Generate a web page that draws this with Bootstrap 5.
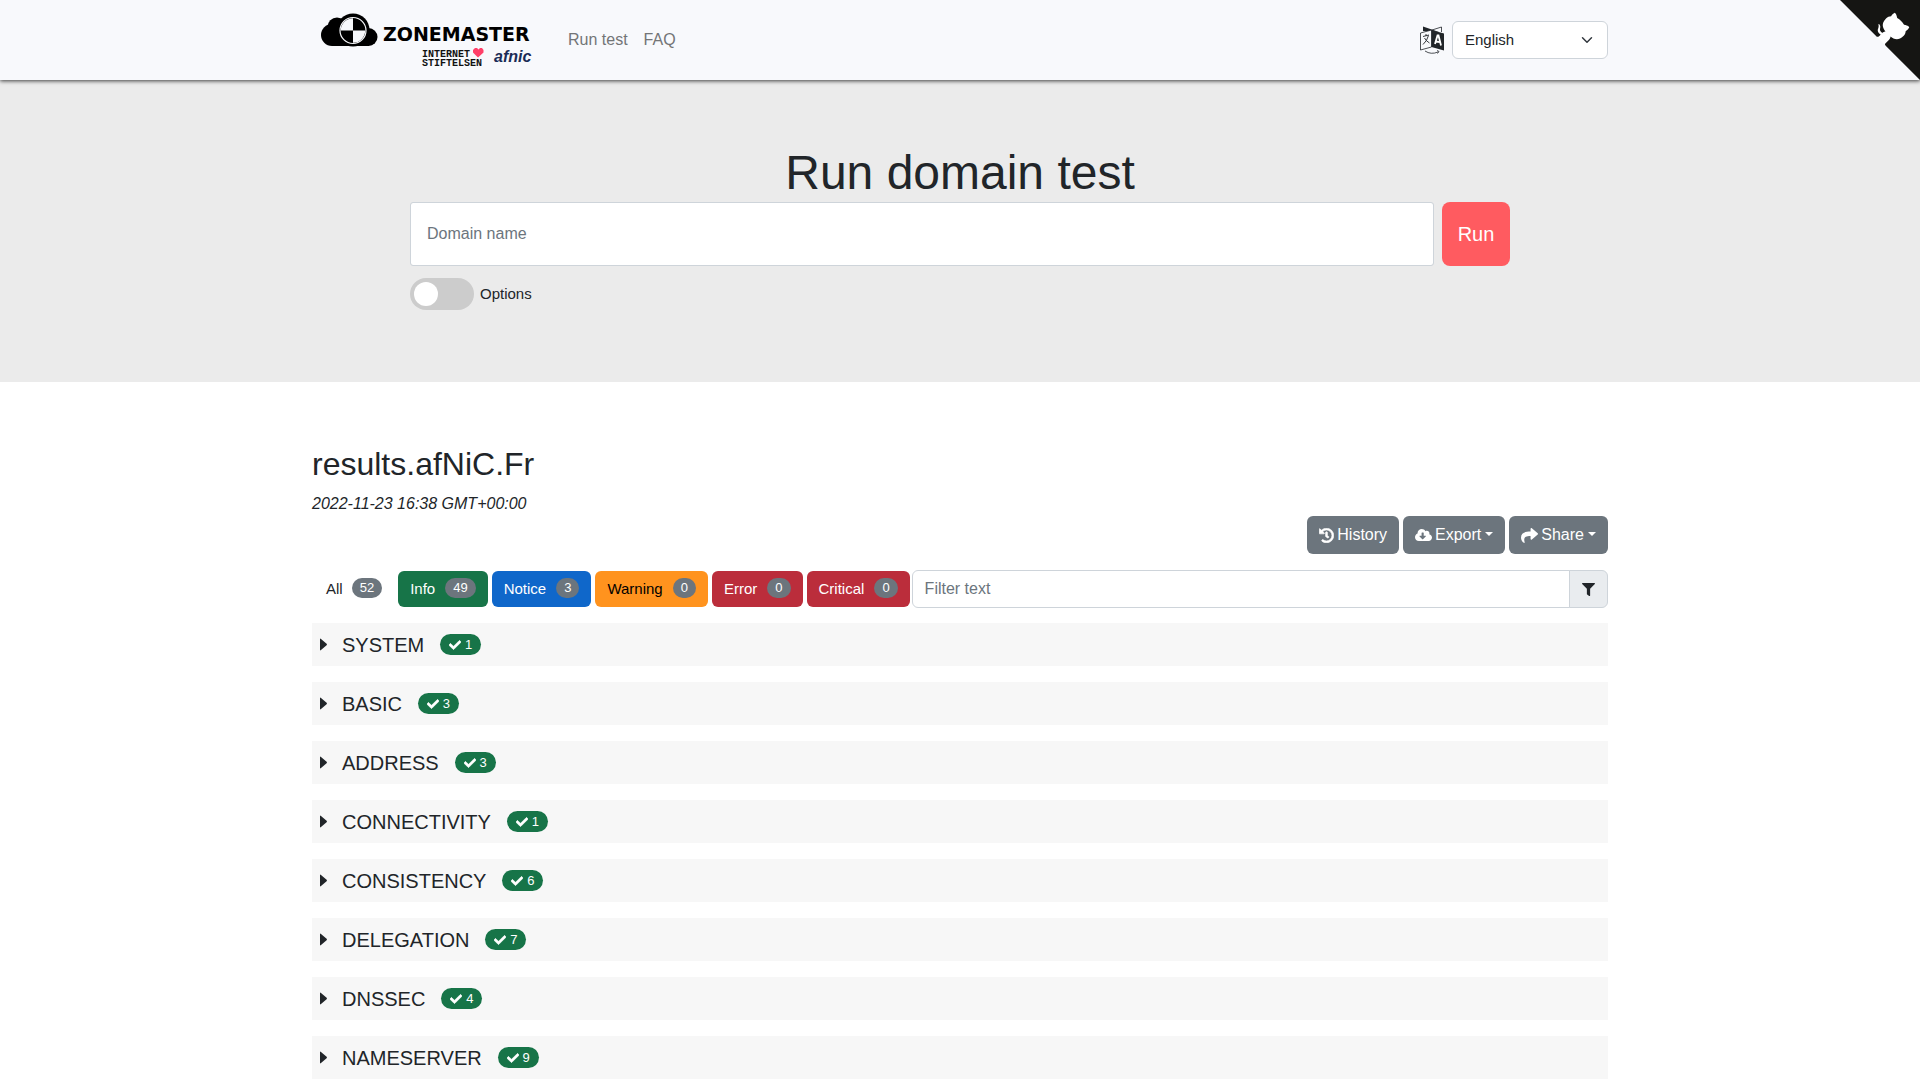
<!DOCTYPE html>
<html lang="en">
<head>
<meta charset="utf-8">
<meta name="viewport" content="width=device-width, initial-scale=1">
<title>Zonemaster</title>
<link rel="stylesheet" href="https://cdn.jsdelivr.net/npm/bootstrap@5.3.0/dist/css/bootstrap.min.css">
<style>
  body { font-family: "Liberation Sans", Arial, sans-serif; color: #212529; }
  .form-control, .form-select, .input-group-text { border-color: #ced4da; }
  .form-control::placeholder { color: #6c757d; }
  .site-nav { min-height: 80px; background: #f8f9fc; box-shadow: 0 1px 4px rgba(0, 0, 0, .75); z-index: 2; }
  .site-nav .nav-link { color: #737577; }
  .nav-frame { max-width: 1320px; }
  .brand-logo { width: 216px; height: 80px; }
  .lang-select { width: 156px; font-size: 15px; height: 38px; }
  .gh-corner { top: 0; right: 0; line-height: 0; z-index: 3; }
  .hero { background: #ebebeb; padding: 64px 0 72px; }
  .hero h1 { font-size: 48px; line-height: 58px; font-weight: 400; margin: 0; }
  .domain-input { height: 64px; border-radius: 3px; padding: 0 16px; }
  .run-btn { width: 68px; height: 64px; background: #ff5b60; color: #fff; font-size: 20px; border-radius: 8px; padding: 0; }
  .opt-switch { appearance: none; width: 64px; height: 32px; border-radius: 16px; background: #ccc; margin: 0; display: flex; align-items: center; padding: 4px; }
  .opt-switch::before { content: ""; width: 24px; height: 24px; border-radius: 50%; background: #fff; }
  .opt-switch:checked { background: #ff5b60; justify-content: flex-end; }
  .opt-row { gap: 6px; }
  .opt-label { font-size: 15px; }
  .results { padding-top: 63px; }
  .results h2 { font-size: 32px; line-height: 38px; font-weight: 400; margin: 0 0 9px; }
  .results time { font-style: italic; line-height: 24px; display: block; }
  .tool-btn { font-size: 16px; height: 38px; background: #6c757d; color: #fff; padding: 0 12px; display: flex; align-items: center; gap: 3px; border: 0; }
  .tool-btn.dropdown-toggle::after { margin-left: 1px; margin-bottom: 3px; }
  .tool-btn svg, .count-pill svg, .filter-icon svg { fill: currentColor; flex: none; }
  .level-bar { margin-bottom: 15px; }
  .level-btn { font-size: 15px; height: 36px; padding: 0 12px; display: flex; align-items: center; gap: 10px; border: 0; border-radius: 6px; color: #fff; }
  .level-btn .badge { background: #6c757d; font-weight: 400; font-size: 13px; line-height: 12px; padding: 4px 8px; border-radius: 10px; }
  .lv-all { color: #212529; padding: 0 12px 0 14px; gap: 9px; }
  .lv-info { background: #177448; }
  .lv-notice { background: #0f67ca; }
  .lv-warning { background: #ff931e; color: #000; }
  .lv-error { background: #bb2d3b; }
  .filter-box { margin-left: -2px; }
  .filter-box .form-control, .filter-icon { height: 38px; font-size: 16px; }
  .filter-box .form-control { padding: 0 12px; }
  .filter-icon { background: #e9ecef; width: 39px; justify-content: center; padding: 0; }
  .module-row { height: 43px; width: 100%; background: #f7f7f7; border: 0; padding: 0 8px; display: flex; align-items: center; color: #212529; font-size: 20px; text-align: left; }
  .module-row .caret { width: 7px; height: 13px; fill: #212529; margin-right: 15px; }
  .count-pill { margin-left: 16px; background: #177448; color: #fff; font-size: 13px; line-height: 13px; padding: 4px 9px; width: 41px; border-radius: 11px; display: flex; align-items: center; justify-content: space-between; }
</style>
</head>
<body>
<svg width="0" height="0" class="position-absolute" aria-hidden="true">
  <symbol id="i-check" viewBox="0 0 512 512"><path d="M173.898 439.404l-166.4-166.4c-9.997-9.997-9.997-26.206 0-36.204l36.203-36.204c9.997-9.998 26.207-9.998 36.204 0L192 312.69 432.095 72.596c9.997-9.997 26.207-9.997 36.204 0l36.203 36.204c9.997 9.997 9.997 26.206 0 36.204l-294.4 294.401c-9.998 9.997-26.207 9.997-36.204-.001z" stroke="#fff" stroke-width="24"/></symbol>
  <symbol id="i-caret" viewBox="0 0 7 12"><path d="M0 .8Q0-.4 1 .5L6.6 5.3Q7.3 6 6.6 6.7L1 11.5Q0 12.4 0 11.2Z"/></symbol>
</svg>

<header class="site-nav position-relative d-flex align-items-center">
  <nav class="container-xxl nav-frame d-flex align-items-center px-0" aria-label="Main">
    <a href="#" class="brand-logo ms-3 d-block" aria-label="Zonemaster home">
      <svg width="216" height="80" viewBox="316 0 216 80" overflow="visible">
        <g fill="#000">
          <circle cx="332" cy="35" r="11"/><circle cx="337" cy="27" r="9.5"/><circle cx="368.500" cy="37" r="9"/><rect x="332" y="34" width="37" height="12"/>
          <circle cx="353" cy="30" r="16.500"/>
        </g>
        <circle cx="353" cy="30.500" r="13" fill="#000" stroke="#f8f9fc" stroke-width="1.200"/>
        <path d="M353 30.500V18.300a12.200 12.200 0 0 0-12.200 12.200ZM353 30.500V42.700a12.200 12.200 0 0 0 12.200-12.200Z" fill="#f8f9fc"/>
        <text x="383" y="41" font-family="DejaVu Sans, sans-serif" font-weight="700" font-size="19" fill="#000">ZONEMASTER</text>
        <g font-family="Liberation Mono, monospace" font-weight="700" font-size="10" fill="#111"><text x="422" y="57">INTERNET</text><text x="422" y="66">STIFTELSEN</text></g>
        <path d="M478 57.500L473 52.500V50L475 48H477L478.500 49.500L480 48H482L483.500 50V52.500Z" fill="#ff4069"/>
        <text x="494" y="62" font-family="Liberation Sans, sans-serif" font-weight="700" font-style="italic" font-size="16" fill="#1b2c57">afnic</text>
      </svg>
    </a>
    <ul class="nav ms-4 ps-1">
      <li class="nav-item"><a class="nav-link px-2" href="#">Run test</a></li>
      <li class="nav-item"><a class="nav-link px-2" href="#">FAQ</a></li>
    </ul>
    <div class="d-flex align-items-center ms-auto gap-2 me-2 pe-1">
      <label for="lang" aria-label="Language" class="d-flex">
        <svg width="24" height="28" viewBox="0 0 24 28" fill="none" stroke="#212529">
          <path d="M3 5V.500L19 6Z" fill="#212529" stroke="none"/><path d="M12 4L21.500 1V6" stroke-width=".8"/>
          <path d="M.500 7L11.500 4V21L.500 24Z" fill="#f8f9fc" stroke-width=".8"/><path d="M11.500 4L24 7.500V24.500L11.500 21Z" fill="#212529" stroke="none"/>
          <path d="M3 10.500L9 9M6 8V10M8.500 9.500Q7 15 3 18.500M4.500 12Q6 15 9.500 17" stroke-width=".9"/>
          <path d="M15 18L17.500 9.500H18.500L21 19.500M15.700 15.500L20 16.200" stroke="#fff" stroke-width="1.800"/>
          <path d="M5 25Q11 29 18 26M17 24.500L19 25.500L17.500 27.500" stroke-width=".8"/>
        </svg>
      </label>
      <select id="lang" class="form-select lang-select"><option>English</option><option>Français</option><option>Svenska</option></select>
    </div>
  </nav>
  <a href="#" class="gh-corner position-absolute" aria-label="View source on GitHub">
    <svg width="80" height="80" viewBox="0 0 250 250" fill="#151513">
      <path d="M0,0 L115,115 L130,115 L142,142 L250,250 L250,0 Z"/>
      <path d="M128.3,109.0 C113.8,99.7 119.0,89.6 119.0,89.6 C122.0,82.7 120.5,78.6 120.5,78.6 C119.2,72.0 123.4,76.3 123.4,76.3 C127.3,80.9 125.5,87.3 125.5,87.3 C122.9,97.6 130.6,101.9 134.4,103.2" fill="#fff"/>
      <path d="M115.0,115.0 C114.9,115.1 118.7,116.5 119.8,115.4 L133.7,101.6 C136.9,99.2 139.9,98.4 142.2,98.6 C133.8,88.0 127.5,74.4 143.8,58.0 C148.5,53.4 154.0,51.2 159.7,51.0 C160.3,49.4 163.2,43.6 171.4,40.1 C171.4,40.1 176.1,42.5 178.8,56.2 C183.1,58.6 187.2,61.8 190.9,65.4 C194.5,69.0 197.7,73.2 200.1,77.6 C213.8,80.2 216.3,84.9 216.3,84.9 C212.7,93.1 206.9,96.0 205.4,96.6 C205.1,102.4 203.0,107.8 198.3,112.5 C181.9,128.9 168.3,122.5 157.7,114.1 C157.9,116.9 156.7,120.9 152.7,124.9 L141.0,136.5 C139.8,137.7 141.6,141.9 141.8,141.8 Z" fill="#fff"/>
    </svg>
  </a>
</header>

<main>
  <section class="hero">
    <div class="container-xxl">
      <div class="row justify-content-center">
        <form class="col-10 px-0">
          <h1 class="text-center">Run domain test</h1>
          <div class="d-flex gap-2">
            <input id="domain" type="text" class="form-control domain-input" placeholder="Domain name" aria-label="Domain name">
            <button type="button" class="btn run-btn flex-shrink-0">Run</button>
          </div>
          <div class="d-flex align-items-center mt-2 pt-1 opt-row">
            <input type="checkbox" role="switch" id="options" class="opt-switch">
            <label for="options" class="opt-label">Options</label>
          </div>
        </form>
      </div>
    </div>
  </section>

  <section class="container-xxl results">
    <h2>results.afNiC.Fr</h2>
    <time datetime="2022-11-23T16:38Z">2022-11-23 16:38 GMT+00:00</time>
    <div class="d-flex justify-content-end gap-1 mb-3">
      <button type="button" class="btn tool-btn"><svg width="15" height="15" viewBox="0 0 512 512"><path d="M504 255.531c.253 136.64-111.18 248.372-247.82 248.468-59.015.042-113.223-20.53-155.822-54.911-11.077-8.94-11.905-25.541-1.839-35.607l11.267-11.267c8.609-8.609 22.353-9.551 31.891-1.984C173.062 425.135 212.781 440 256 440c101.705 0 184-82.311 184-184 0-101.705-82.311-184-184-184-48.814 0-93.149 18.969-126.068 49.932l50.754 50.754c10.08 10.08 2.941 27.314-11.313 27.314H24c-8.837 0-16-7.163-16-16V38.627c0-14.254 17.234-21.393 27.314-11.314l49.372 49.372C129.209 34.136 189.552 8 256 8c136.81 0 247.747 110.78 248 247.531zm-180.912 78.784l9.823-12.63c8.138-10.463 6.253-25.542-4.21-33.679L288 256.349V152c0-13.255-10.745-24-24-24h-16c-13.255 0-24 10.745-24 24v135.651l65.409 50.874c10.463 8.137 25.541 6.253 33.679-4.21z" stroke="#fff" stroke-width="20"/></svg>History</button>
      <button type="button" class="btn tool-btn dropdown-toggle"><svg width="17" height="14" viewBox="0 0 640 512"><path d="M537.600 226.600c4.100-10.700 6.400-22.400 6.400-34.600 0-53-43-96-96-96-19.700 0-38.100 6-53.300 16.200C367 64.200 315.300 32 256 32c-88.400 0-160 71.600-160 160 0 2.700.1 5.400.2 8.100C40.200 219.800 0 273.200 0 336c0 79.500 64.500 144 144 144h368c70.700 0 128-57.300 128-128 0-61.900-44-113.600-102.400-125.400zm-132.900 88.700L299.300 420.700c-6.200 6.200-16.400 6.200-22.600 0L171.300 315.300c-10.100-10.100-2.900-27.300 11.300-27.300H248V176c0-8.800 7.200-16 16-16h48c8.800 0 16 7.200 16 16v112h65.400c14.200 0 21.400 17.200 11.300 27.300z"/></svg>Export</button>
      <button type="button" class="btn tool-btn dropdown-toggle"><svg width="17" height="17" viewBox="0 0 512 512"><path d="M503.691 189.836L327.687 37.851C312.281 24.546 288 35.347 288 56.015v80.053C127.371 137.907 0 170.100 0 322.326c0 61.441 39.581 122.309 83.333 154.132 13.653 9.931 33.111-2.533 28.077-18.631C66.066 312.814 132.917 274.316 288 272.085V360c0 20.700 24.300 31.453 39.687 18.164l176.004-152c11.071-9.562 11.086-26.753 0-36.328z"/></svg>Share</button>
    </div>
    <div class="d-flex align-items-center gap-1 level-bar">
      <button type="button" class="btn level-btn lv-all">All <span class="badge">52</span></button>
      <button type="button" class="btn level-btn lv-info">Info <span class="badge">49</span></button>
      <button type="button" class="btn level-btn lv-notice">Notice <span class="badge">3</span></button>
      <button type="button" class="btn level-btn lv-warning">Warning <span class="badge">0</span></button>
      <button type="button" class="btn level-btn lv-error">Error <span class="badge">0</span></button>
      <button type="button" class="btn level-btn lv-error">Critical <span class="badge">0</span></button>
      <div class="input-group flex-grow-1 w-auto filter-box">
        <input type="text" class="form-control" placeholder="Filter text" aria-label="Filter text">
        <span class="input-group-text filter-icon"><svg width="13" height="13" viewBox="0 0 512 512"><path d="M487.976 0H24.028C2.710 0-8.047 25.866 7.058 40.971L192 225.941V432c0 7.831 3.821 15.170 10.237 19.662l80 55.980C298.020 518.690 320 507.493 320 487.980V225.941l184.947-184.970C520.021 25.896 509.338 0 487.976 0z"/></svg></span>
      </div>
    </div>
    <div class="d-flex flex-column gap-3">
      <button type="button" class="module-row"><svg class="caret"><use href="#i-caret"/></svg>SYSTEM<span class="count-pill"><svg width="12" height="12"><use href="#i-check"/></svg>1</span></button>
      <button type="button" class="module-row"><svg class="caret"><use href="#i-caret"/></svg>BASIC<span class="count-pill"><svg width="12" height="12"><use href="#i-check"/></svg>3</span></button>
      <button type="button" class="module-row"><svg class="caret"><use href="#i-caret"/></svg>ADDRESS<span class="count-pill"><svg width="12" height="12"><use href="#i-check"/></svg>3</span></button>
      <button type="button" class="module-row"><svg class="caret"><use href="#i-caret"/></svg>CONNECTIVITY<span class="count-pill"><svg width="12" height="12"><use href="#i-check"/></svg>1</span></button>
      <button type="button" class="module-row"><svg class="caret"><use href="#i-caret"/></svg>CONSISTENCY<span class="count-pill"><svg width="12" height="12"><use href="#i-check"/></svg>6</span></button>
      <button type="button" class="module-row"><svg class="caret"><use href="#i-caret"/></svg>DELEGATION<span class="count-pill"><svg width="12" height="12"><use href="#i-check"/></svg>7</span></button>
      <button type="button" class="module-row"><svg class="caret"><use href="#i-caret"/></svg>DNSSEC<span class="count-pill"><svg width="12" height="12"><use href="#i-check"/></svg>4</span></button>
      <button type="button" class="module-row"><svg class="caret"><use href="#i-caret"/></svg>NAMESERVER<span class="count-pill"><svg width="12" height="12"><use href="#i-check"/></svg>9</span></button>
    </div>
  </section>
</main>
<script src="https://cdn.jsdelivr.net/npm/bootstrap@5.3.0/dist/js/bootstrap.bundle.min.js"></script>
</body>
</html>
